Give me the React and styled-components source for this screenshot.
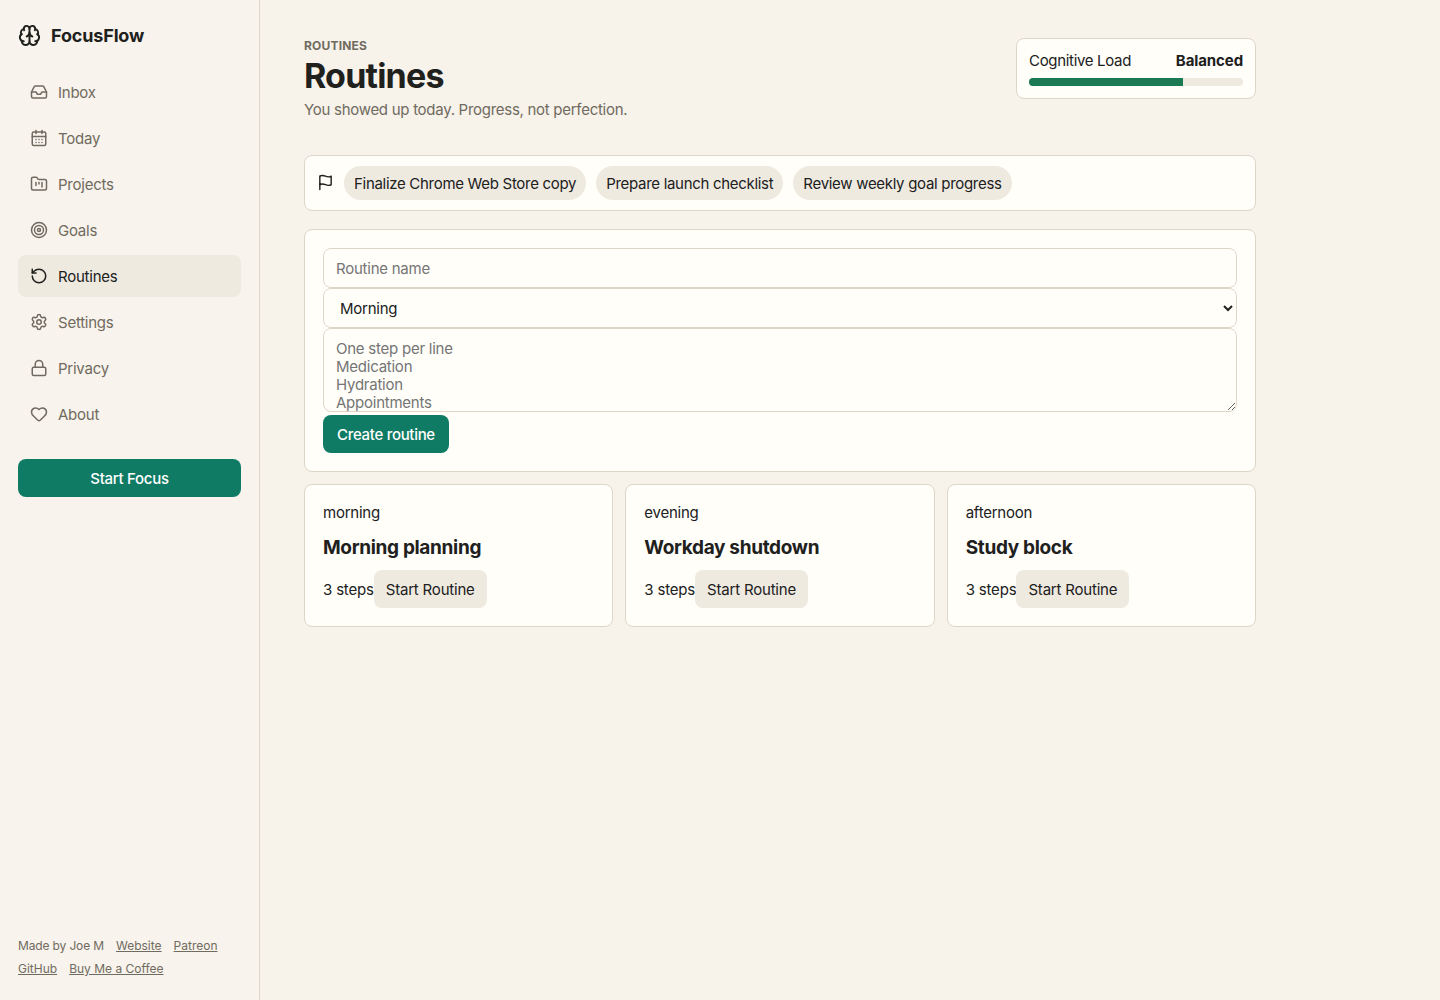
import React, { useState } from "react";
import styled, { createGlobalStyle, css } from "styled-components";
import {
  Brain,
  CalendarDays,
  FolderKanban,
  Heart,
  Inbox,
  Lock,
  RotateCcw,
  Settings,
  Target,
} from "lucide-react";

const NAV = [
  { label: "Inbox", icon: Inbox },
  { label: "Today", icon: CalendarDays },
  { label: "Projects", icon: FolderKanban },
  { label: "Goals", icon: Target },
  { label: "Routines", icon: RotateCcw },
  { label: "Settings", icon: Settings },
  { label: "Privacy", icon: Lock },
  { label: "About", icon: Heart },
];

const PRIORITIES = [
  "Finalize Chrome Web Store copy",
  "Prepare launch checklist",
  "Review weekly goal progress",
];

const ROUTINES = [
  { period: "morning", name: "Morning planning", steps: 3 },
  { period: "evening", name: "Workday shutdown", steps: 3 },
  { period: "afternoon", name: "Study block", steps: 3 },
];

const LINKS = ["Website", "Patreon", "GitHub", "Buy Me a Coffee"];

const App = () => {
  const [active, setActive] = useState("Routines");

  return (
    <Shell>
      <GlobalStyle />
      <Sidebar>
        <Brand>
          <Brain size={23} />
          <span>FocusFlow</span>
        </Brand>
        <Nav>
          {NAV.map(({ label, icon: Icon }) => (
            <NavItem
              key={label}
              type="button"
              $active={label === active}
              onClick={() => setActive(label)}
            >
              <Icon size={18} />
              <span>{label}</span>
            </NavItem>
          ))}
        </Nav>
        <FocusButton type="button">Start Focus</FocusButton>
        <Credits>
          <span>Made by Joe M</span>
          {LINKS.map((link) => (
            <a key={link} href="#">
              {link}
            </a>
          ))}
        </Credits>
      </Sidebar>
      <Main>
        <Header>
          <div>
            <Eyebrow>Routines</Eyebrow>
            <Title>Routines</Title>
            <Subtitle>You showed up today. Progress, not perfection.</Subtitle>
          </div>
          <LoadCard>
            <LoadRow>
              <span>Cognitive Load</span>
              <strong>Balanced</strong>
            </LoadRow>
            <Meter>
              <MeterFill style={{ width: "72%" }} />
            </Meter>
          </LoadCard>
        </Header>
        <PriorityStrip>
          <FlagIcon viewBox="0 0 24 24" aria-hidden="true">
            <path d="M4 15s1-1 4-1 5 2 8 2 4-1 4-1V3s-1 1-4 1-5-2-8-2-4 1-4 1z" />
            <path d="M4 22v-7" />
          </FlagIcon>
          {PRIORITIES.map((item) => (
            <Chip key={item}>{item}</Chip>
          ))}
        </PriorityStrip>
        <RoutineForm onSubmit={(e) => e.preventDefault()}>
          <Input placeholder="Routine name" />
          <Select defaultValue="Morning">
            <option>Morning</option>
            <option>Afternoon</option>
            <option>Evening</option>
          </Select>
          <Textarea
            placeholder={"One step per line\nMedication\nHydration\nAppointments"}
          />
          <CreateButton type="submit">Create routine</CreateButton>
        </RoutineForm>
        <Cards>
          {ROUTINES.map(({ period, name, steps }) => (
            <Card key={name}>
              <Period>{period}</Period>
              <CardTitle>{name}</CardTitle>
              <CardFooter>
                <span>{steps} steps</span>
                <SoftButton type="button">Start Routine</SoftButton>
              </CardFooter>
            </Card>
          ))}
        </Cards>
      </Main>
    </Shell>
  );
};

export default App;

const GlobalStyle = createGlobalStyle`
  * {
    box-sizing: border-box;
  }

  body {
    margin: 0;
    background: #f7f2ea;
    color: #20201d;
    font-family: Inter, "Liberation Sans", sans-serif;
    font-size: 15px;
    line-height: 18px;
    letter-spacing: -0.24px;
  }

  button,
  input,
  select,
  textarea {
    font: inherit;
    letter-spacing: inherit;
    color: inherit;
  }
`;

const panel = css`
  background: #fffef9;
  border: 1px solid #ded6c8;
  border-radius: 8px;
`;

const Shell = styled.div`
  display: grid;
  grid-template-columns: 260px 1fr;
  min-height: 100vh;
`;

const Sidebar = styled.aside`
  display: flex;
  flex-direction: column;
  height: 100vh;
  padding: 24px 18px 20px;
  border-right: 1px solid #ded6c8;
  background: #f8f3ec;
`;

const Brand = styled.div`
  display: flex;
  align-items: center;
  gap: 10px;
  height: 23px;
  margin-bottom: 24px;
  font-size: 18px;
  font-weight: 700;
  letter-spacing: -0.15px;
`;

const Nav = styled.nav`
  display: grid;
  gap: 4px;
`;

const NavItem = styled.button`
  display: flex;
  align-items: center;
  gap: 10px;
  height: 42px;
  padding: 0 12px;
  border: 0;
  border-radius: 8px;
  background: ${({ $active }) => ($active ? "#efeae0" : "transparent")};
  color: ${({ $active }) => ($active ? "#20201d" : "#706b60")};
  text-align: left;
  cursor: pointer;

  span {
    padding-top: 1px;
  }
`;

const Button = styled.button`
  height: 38px;
  padding: 1px 14px 0;
  border: 0;
  border-radius: 8px;
  background: #0f7b65;
  color: #fff;
  font-weight: 500;
  letter-spacing: -0.3px;
  cursor: pointer;
`;

const FocusButton = styled(Button)`
  margin-top: 24px;
`;

const CreateButton = styled(Button)`
  margin-top: 3px;
`;

const SoftButton = styled(Button)`
  padding: 1px 12px 0;
  background: #efeae0;
  color: #20201d;
  font-weight: 400;
  letter-spacing: -0.2px;
`;

const Credits = styled.footer`
  display: flex;
  flex-wrap: wrap;
  gap: 8px 12px;
  margin-top: auto;
  padding-bottom: 4px;
  color: #706b60;
  font-size: 12px;
  line-height: 15px;
  letter-spacing: 0;

  span {
    letter-spacing: -0.14px;
  }

  a {
    color: inherit;
  }
`;

const Main = styled.main`
  max-width: 1040px;
  padding: 38px 44px;
`;

const Header = styled.header`
  display: flex;
  justify-content: space-between;
  align-items: flex-start;
  height: 117px;
`;

const Eyebrow = styled.div`
  color: #706b60;
  font-size: 12px;
  font-weight: 700;
  line-height: 15px;
  letter-spacing: 0.18px;
  text-transform: uppercase;
`;

const Title = styled.h1`
  margin: 2px 0 5px;
  font-size: 34px;
  font-weight: 700;
  line-height: 41px;
  letter-spacing: -0.8px;
`;

const Subtitle = styled.p`
  margin: 0;
  color: #706b60;
  letter-spacing: -0.28px;
`;

const LoadCard = styled.div`
  ${panel}
  width: 240px;
  height: 61px;
  padding: 13px 12px 12px;
`;

const LoadRow = styled.div`
  display: flex;
  justify-content: space-between;
  letter-spacing: -0.32px;

  strong {
    letter-spacing: -0.1px;
  }
`;

const Meter = styled.div`
  height: 8px;
  margin-top: 8px;
  border-radius: 4px;
  background: #efeae0;
  overflow: hidden;
`;

const MeterFill = styled.div`
  height: 100%;
  background: #1b7a51;
`;

const PriorityStrip = styled.section`
  ${panel}
  display: flex;
  align-items: center;
  gap: 10px;
  height: 56px;
  padding: 0 12px;
  margin-bottom: 18px;
`;

const FlagIcon = styled.svg`
  width: 17px;
  height: 17px;
  margin-bottom: 1px;
  fill: none;
  stroke: currentColor;
  stroke-width: 2;
  stroke-linecap: round;
  stroke-linejoin: round;
`;

const Chip = styled.span`
  padding: 9px 10px 7px;
  border-radius: 17px;
  background: #efeae0;
  letter-spacing: -0.3px;
`;

const RoutineForm = styled.form`
  ${panel}
  display: flex;
  flex-direction: column;
  align-items: flex-start;
  height: 243px;
  padding: 18px;
  margin-bottom: 12px;
`;

const field = css`
  ${panel}
  width: 100%;
  height: 40px;
  padding: 10px 12px;
  outline: none;

  &::placeholder {
    color: #757575;
  }
`;

const Input = styled.input`
  ${field}
`;

const Select = styled.select`
  ${field}
  padding: 0 12px;
`;

const Textarea = styled.textarea`
  ${field}
  height: 84px;
  padding-top: 11px;
  overflow: hidden;
  resize: vertical;
`;

const Cards = styled.section`
  display: grid;
  grid-template-columns: repeat(3, 1fr);
  gap: 12px;
`;

const Card = styled.article`
  ${panel}
  height: 143px;
  padding: 19px 18px 18px;
`;

const Period = styled.div`
  margin-bottom: 14px;
`;

const CardTitle = styled.h2`
  margin: 0 0 11px;
  font-size: 19px;
  font-weight: 700;
  line-height: 23px;
  letter-spacing: -0.33px;
`;

const CardFooter = styled.div`
  display: flex;
  align-items: center;

  span {
    padding-top: 1px;
    letter-spacing: -0.18px;
  }
`;
